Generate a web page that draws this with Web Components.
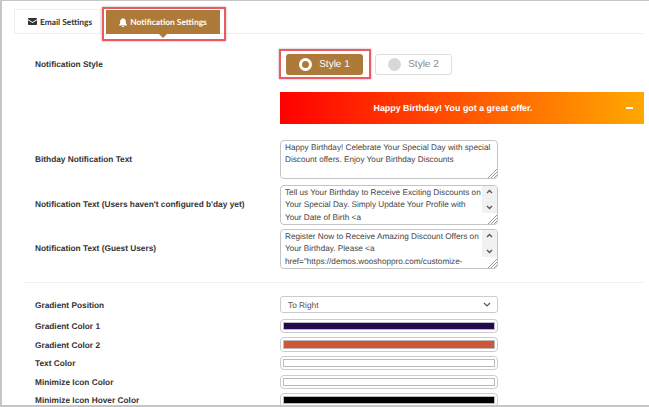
<!doctype html>
<html>
<head>
<meta charset="utf-8">
<style>
  html,body{margin:0;height:100%;background:#fff}
  body{font-family:"Liberation Sans",Arial,sans-serif;overflow:hidden;text-rendering:geometricPrecision;text-align:left}
</style>
</head>
<body>
<settings-page>
  <settings-tabs></settings-tabs>
  <setting-row label="Notification Style" h="30" top="15" align="center"><style-picker></style-picker></setting-row>
  <setting-row h="32" top="13"><offer-banner>Happy Birthday! You got a great offer.</offer-banner></setting-row>
  <setting-row flush label="Bithday Notification Text" h="39" top="16" align="center"><text-box h="39">Happy Birthday! Celebrate Your Special Day with special Discount offers. Enjoy Your Birthday Discounts</text-box></setting-row>
  <setting-row flush label="Notification Text (Users haven't configured b'day yet)" h="38" top="6" align="center"><text-box h="38" scroll>Tell us Your Birthday to Receive Exciting Discounts on Your Special Day. Simply Update Your Profile with Your Date of Birth &lt;a</text-box></setting-row>
  <setting-row flush label="Notification Text (Guest Users)" h="38" top="6" align="center"><text-box h="38" scroll>Register Now to Receive Amazing Discount Offers on Your Birthday. Please &lt;a href="https://demos.wooshoppro.com/customize-</text-box></setting-row>
  <hr-line></hr-line>
  <setting-row label="Gradient Position" h="17" top="13" align="center"><select-box>To Right</select-box></setting-row>
  <setting-row label="Gradient Color 1" h="14" top="6" align="center"><color-bar color="#24094f"></color-bar></setting-row>
  <setting-row label="Gradient Color 2" h="15" top="4" align="center"><color-bar color="#cf5636"></color-bar></setting-row>
  <setting-row label="Text Color" h="14" top="4" align="center"><color-bar color="#ffffff"></color-bar></setting-row>
  <setting-row label="Minimize Icon Color" h="14" top="5" align="center"><color-bar color="#ffffff"></color-bar></setting-row>
  <setting-row label="Minimize Icon Hover Color" h="14" top="4" align="center"><color-bar color="#000000"></color-bar></setting-row>
</settings-page>

<script>
function define(name, css, html, init){
  customElements.define(name, class extends HTMLElement{
    connectedCallback(){
      if(this.shadowRoot) return;
      this.attachShadow({mode:'open'});
      this.shadowRoot.innerHTML = `<style>${css}</style>${typeof html==='function'?html(this):html}`;
      if(init) init(this);
    }
  });
}

define('settings-page', `
  :host{display:block;box-sizing:border-box;width:649px;height:407px;overflow:hidden;
    border:solid #c6c6c6;border-width:1px 0 2px 2px;padding:8px 5px 0 12px;background:#fff;color:#333}
`, `<slot></slot>`);

define('settings-tabs', `
  :host{display:flex;height:24px;border-bottom:1px solid #eee;align-items:stretch;font:700 8.400px Lato,sans-serif;position:relative}
  .tab{display:flex;align-items:center;justify-content:center;gap:3px;box-sizing:border-box}
  .email{width:87px;border:1px solid #eee;border-bottom:0;color:#333;background:#fff;padding-left:5px}
  .notif{width:114px;margin-left:5px;background:#ad7a3a;color:#fff;position:relative;margin-top:1px;height:24px}
  .notif::after{content:"";position:absolute;left:50%;top:100%;margin-left:-4px;
    border:4px solid transparent;border-top-color:#ad7a3a;border-bottom:0}
  .mark{position:absolute;left:88px;top:-2px;width:124px;height:34px;box-sizing:border-box;border:2px solid #ee5a63;
    box-shadow:0 0 2px rgba(0,0,0,.35);pointer-events:none}
  svg{display:block;fill:currentColor}
`, `
  <div class="tab email">
    <svg width="9" height="7" viewBox="0 0 9 7"><path d="M.8 0h7.400c.4 0 .8.4.8.8v.4L4.500 4 0 1.200V.8C0 .4.400 0 .8 0zM0 2.300l4.500 2.800L9 2.300v3.900c0 .4-.4.8-.8.8H.8C.4 7 0 6.600 0 6.200z"/></svg>
    <span>Email Settings</span>
  </div>
  <div class="tab notif">
    <svg width="8" height="9" viewBox="0 0 8 9"><path d="M4 0c.4 0 .6.300.6.600C6 1 6.800 2 6.800 3.400c0 2 .5 2.800 1.200 3.500v.5H0v-.5c.7-.7 1.200-1.500 1.200-3.500C1.200 2 2 1 3.400.6 3.400.3 3.600 0 4 0zM3 8h2c0 .6-.4 1-1 1s-1-.4-1-1z"/></svg>
    <span>Notification Settings</span>
  </div>
  <div class="mark"></div>
`);

define('setting-row', `
  :host{display:grid;grid-template-columns:245px 364px;padding-left:21px}
  .label{font:700 8.300px/11px "Liberation Sans",Arial,sans-serif;color:#333;display:flex;align-items:center;white-space:nowrap;padding-top:1px}
  :host([flush]) .label{padding-top:0;padding-bottom:1px}
`, el=>`<div class="label">${el.getAttribute('label')||''}</div><div class="ctl"><slot></slot></div>`,
el=>{
  el.style.marginTop=(el.getAttribute('top')||0)+'px';
  el.style.height=(el.getAttribute('h')||20)+'px';
});

define('style-picker', `
  :host{display:flex;gap:12px;padding:5px 0 0 6px;position:relative}
  .btn{box-sizing:border-box;width:77px;height:21px;border-radius:3px;display:flex;align-items:center;justify-content:center;gap:7px;
    font:10px "Liberation Sans",Arial,sans-serif}
  .on{background:#ad7a3a;color:#fff}
  .off{border:1px solid #ddd;color:#8a8a8a;background:#fff}
  .dot{width:13px;height:13px;border-radius:50%;box-sizing:border-box}
  .on .dot{border:3px solid #fff}
  .off .dot{background:#d8d8d8}
  .mark{position:absolute;left:-1px;top:0;width:92px;height:30px;box-sizing:border-box;border:2px solid #ee5a63;box-shadow:0 0 2px rgba(0,0,0,.35)}
`, `
  <div class="btn on"><span class="dot"></span><span>Style 1</span></div>
  <div class="btn off"><span class="dot"></span><span>Style 2</span></div>
  <div class="mark"></div>
`);

define('offer-banner', `
  :host{display:flex;height:32px;align-items:center;justify-content:center;position:relative;
    background:linear-gradient(to right,#ff0000,#ffa800);color:#fff;font:700 8.900px "Liberation Sans",Arial,sans-serif;padding-right:18px;box-sizing:border-box}
  .min{position:absolute;right:11px;top:15px;width:7px;height:2px;background:#fff}
`, `<slot></slot><span class="min"></span>`);

define('text-box', `
  :host{display:block;box-sizing:border-box;width:218px;height:100%;border:1px solid #c4c4c4;border-radius:4px;position:relative;overflow:hidden;background:#fff;text-align:left}
  .txt{padding:1px 4px 0 4px;font:8.200px/12.400px "Liberation Sans",Arial,sans-serif;color:#444;height:100%;overflow:hidden;box-sizing:border-box;text-align:left}
  :host([scroll]) .txt{padding-right:14px}
  .bar{position:absolute;right:0;top:0;width:15px;height:27px;background:#f1f1f1;display:flex;flex-direction:column;justify-content:space-between;align-items:center;padding:3px 0;box-sizing:border-box}
  .grip{position:absolute;right:0;bottom:0}
  svg{display:block}
`, el=>`<div class="txt"><slot></slot></div>
  ${el.hasAttribute('scroll')?`<div class="bar">
    <svg width="7" height="5" viewBox="0 0 7 5"><path d="M1 4l2.500-2.500L6 4" fill="none" stroke="#555" stroke-width="1.300"/></svg>
    <svg width="7" height="5" viewBox="0 0 7 5"><path d="M1 1l2.500 2.500L6 1" fill="none" stroke="#555" stroke-width="1.300"/></svg>
  </div>`:''}
  <svg class="grip" width="9" height="9" viewBox="0 0 9 9"><path d="M0 9L9 0M3 9l6-6M6 9l3-3" stroke="#999" fill="none"/></svg>`);

define('hr-line', `
  :host{display:block;height:1px;background:#f2f2f2;margin:15px 0 0 9px}
`, ``);

define('select-box', `
  :host{display:flex;box-sizing:border-box;width:218px;height:17px;border:1px solid #ccc;border-radius:3px;align-items:center;
    padding:0 6px 0 7px;justify-content:space-between;font:8.300px "Liberation Sans",Arial,sans-serif;color:#555;background:#fff}
  svg{display:block}
`, `<slot></slot><svg width="8" height="5" viewBox="0 0 8 5"><path d="M1 1l3 3 3-3" fill="none" stroke="#555" stroke-width="1.200"/></svg>`);

define('color-bar', `
  :host{display:block;box-sizing:border-box;width:218px;height:100%;border:1px solid #ccc;border-radius:4px;padding:2px;background:#fff}
  .fill{height:100%;box-sizing:border-box;border:1px solid #bbb}
`, el=>`<div class="fill" style="background:${el.getAttribute('color')}"></div>`);
</script>
</body>
</html>
